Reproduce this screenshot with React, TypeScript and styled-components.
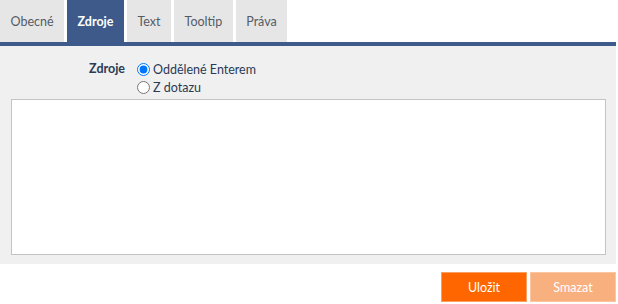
import { useState } from 'react';
import styled, { createGlobalStyle } from 'styled-components';

const tabs = ['Obecné', 'Zdroje', 'Text', 'Tooltip', 'Práva'];

export default function App() {
  const [active, setActive] = useState('Zdroje');
  const [source, setSource] = useState('enter');

  return (
    <>
      <GlobalStyle />
      <S.Page>
        <S.TabBar>
          {tabs.map((tab) => (
            <S.Tab key={tab} $active={tab === active} onClick={() => setActive(tab)}>
              {tab}
            </S.Tab>
          ))}
        </S.TabBar>
        <S.Panel>
          <S.FormRow>
            <S.Label>Zdroje</S.Label>
            <S.Options>
              <S.Option>
                <S.Radio
                  type='radio'
                  name='source'
                  checked={source === 'enter'}
                  onChange={() => setSource('enter')}
                />
                Oddělené Enterem
              </S.Option>
              <S.Option>
                <S.Radio
                  type='radio'
                  name='source'
                  checked={source === 'query'}
                  onChange={() => setSource('query')}
                />
                Z dotazu
              </S.Option>
            </S.Options>
          </S.FormRow>
          <S.TextArea />
        </S.Panel>
        <S.Actions>
          <S.Button $variant='primary'>Uložit</S.Button>
          <S.Button $variant='muted'>Smazat</S.Button>
        </S.Actions>
      </S.Page>
    </>
  );
}

const GlobalStyle = createGlobalStyle`
  body {
    margin: 0;
    background: #ffffff;
    font-family: "Segoe UI", Lato, "Liberation Sans", sans-serif;
    font-size: 12px;
  }
`;

const S = {
  Page: styled.div`
    width: 616px;
  `,

  TabBar: styled.div`
    display: flex;
    gap: 3px;
    height: 42px;
    border-bottom: 4px solid #3d5a8a;
  `,

  Tab: styled.button<{ $active: boolean }>`
    display: flex;
    align-items: center;
    padding: 0 10.5px;
    border: none;
    font-family: inherit;
    font-size: 12.5px;
    cursor: pointer;
    background-color: ${({ $active }) => ($active ? '#3d5a8a' : '#e6e6e6')};
    color: ${({ $active }) => ($active ? '#ffffff' : '#545c66')};
    font-weight: ${({ $active }) => ($active ? 700 : 400)};
  `,

  Panel: styled.div`
    display: flex;
    flex-direction: column;
    gap: 3px;
    padding: 14px 10px 9px 11px;
    background-color: #f0f0f0;
  `,

  FormRow: styled.div`
    display: flex;
    gap: 11px;
  `,

  Label: styled.div`
    width: 114px;
    text-align: right;
    font-size: 12.5px;
    font-weight: 700;
    color: #2b3a55;
    line-height: 18px;
  `,

  Options: styled.div`
    display: flex;
    flex-direction: column;
  `,

  Option: styled.label`
    display: flex;
    align-items: center;
    height: 18px;
    font-size: 12.5px;
    color: #2b3a55;
    cursor: pointer;
  `,

  Radio: styled.input`
    width: 13px;
    height: 13px;
    margin: 0 3px 0 1px;
    accent-color: #0075ff;
  `,

  TextArea: styled.textarea`
    display: block;
    box-sizing: border-box;
    width: 100%;
    height: 156px;
    margin: 0;
    border: 1px solid #c4c4c4;
    background: #ffffff;
    resize: none;
    outline: none;
  `,

  Actions: styled.div`
    display: flex;
    justify-content: flex-end;
    gap: 3px;
    margin-top: 8px;
  `,

  Button: styled.button<{ $variant: 'primary' | 'muted' }>`
    width: 86px;
    height: 30px;
    padding: 0;
    font-family: inherit;
    font-size: 12.5px;
    color: #ffffff;
    cursor: pointer;
    background-color: ${({ $variant }) => ($variant === 'primary' ? '#ff6600' : '#f9b07f')};
    border: 1px solid ${({ $variant }) => ($variant === 'primary' ? '#f8a060' : '#fbc6a0')};
  `,
};
